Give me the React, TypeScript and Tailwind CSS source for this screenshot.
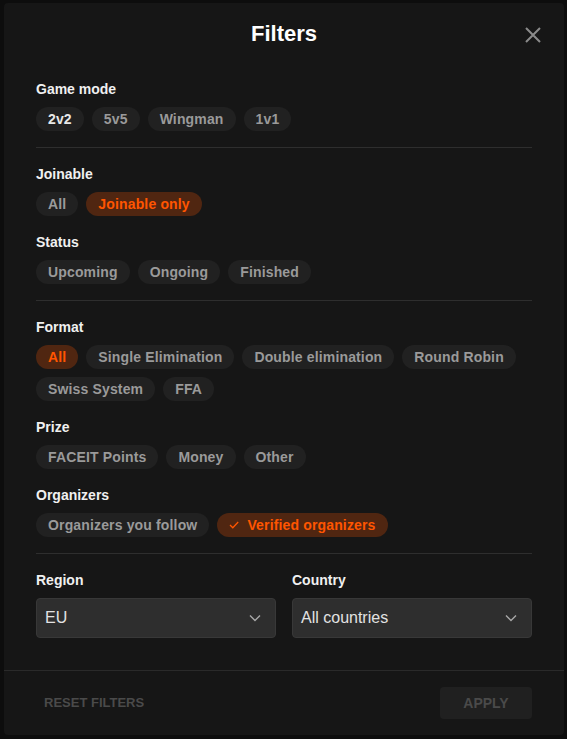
import React from "react"

type ChipProps = {
  label: string
  active?: boolean
  current?: boolean
  check?: boolean
}

function Chip({ label, active, current, check }: ChipProps) {
  if (active) {
    return (
      <span className="flex h-6 items-center gap-2 rounded-full bg-[#502611] px-3 text-[14px] font-bold tracking-[0.15px] text-[#ff5500]">
        {check && (
          <svg width="10" height="8" viewBox="0 0 10 8" fill="none">
            <path d="M1 4L3.8 6.8L9.2 1" stroke="#ff5500" strokeWidth="1.3" />
          </svg>
        )}
        {label}
      </span>
    )
  }
  return (
    <span
      className={`flex h-6 items-center rounded-full bg-[#212121] px-3 text-[14px] font-bold tracking-[0.15px] ${
        current ? "text-[#e8e8e8]" : "text-[#9a9a9a]"
      }`}
    >
      {label}
    </span>
  )
}

function Group({ title, children }: { title: string; children: React.ReactNode }) {
  return (
    <div>
      <div className="mb-2 h-5 text-[14px] font-bold leading-5 text-[#f0f0f0]">{title}</div>
      <div className="flex flex-wrap gap-2">{children}</div>
    </div>
  )
}

function Select({ label, value }: { label: string; value: string }) {
  return (
    <div className="flex-1">
      <div className="mb-2 h-5 text-[14px] font-bold leading-5 text-[#f0f0f0]">{label}</div>
      <div className="flex h-10 items-center justify-between rounded border border-[#383838] bg-[#2e2e2e] pl-2 pr-[14px]">
        <span className="text-[16px] text-[#e2e2e2]">{value}</span>
        <svg width="12" height="8" viewBox="0 0 12 8" fill="none">
          <path d="M1 1.5L6 6.5L11 1.5" stroke="#a8a8a8" strokeWidth="1.4" />
        </svg>
      </div>
    </div>
  )
}

export default function App() {
  return (
    <div
      className="min-h-screen bg-[#0d0d0d] pl-[4px] pt-[3px]"
      style={{ fontFamily: '"Liberation Sans", Arial, sans-serif' }}
    >
      <div className="flex h-[732px] w-[560px] flex-col rounded bg-[#161616]">
        {/* Header */}
        <div className="relative flex h-[60px] items-center justify-center">
          <h1 className="text-[22px] font-bold text-white">Filters</h1>
          <button className="absolute right-[23px] top-[24px]">
            <svg width="16" height="16" viewBox="0 0 16 16" fill="none">
              <path d="M1 1L15 15M15 1L1 15" stroke="#8a8a8a" strokeWidth="2" />
            </svg>
          </button>
        </div>

        {/* Body */}
        <div className="flex-1 px-8 pt-4">
          <Group title="Game mode">
            <Chip label="2v2" current />
            <Chip label="5v5" />
            <Chip label="Wingman" />
            <Chip label="1v1" />
          </Group>

          <div className="my-4 h-px bg-[#2e2e2e]" />

          <div className="flex flex-col gap-4">
            <Group title="Joinable">
              <Chip label="All" />
              <Chip label="Joinable only" active />
            </Group>
            <Group title="Status">
              <Chip label="Upcoming" />
              <Chip label="Ongoing" />
              <Chip label="Finished" />
            </Group>
          </div>

          <div className="my-4 h-px bg-[#2e2e2e]" />

          <div className="flex flex-col gap-4">
            <Group title="Format">
              <Chip label="All" active />
              <Chip label="Single Elimination" />
              <Chip label="Double elimination" />
              <Chip label="Round Robin" />
              <Chip label="Swiss System" />
              <Chip label="FFA" />
            </Group>
            <Group title="Prize">
              <Chip label="FACEIT Points" />
              <Chip label="Money" />
              <Chip label="Other" />
            </Group>
            <Group title="Organizers">
              <Chip label="Organizers you follow" />
              <Chip label="Verified organizers" active check />
            </Group>
          </div>

          <div className="my-4 h-px bg-[#2e2e2e]" />

          <div className="flex gap-4">
            <Select label="Region" value="EU" />
            <Select label="Country" value="All countries" />
          </div>
        </div>

        {/* Footer */}
        <div className="flex items-center justify-between border-t border-[#2a2a2a] px-8 py-4">
          <button className="pl-2 text-[13px] font-bold uppercase text-[#4a4a4a]">Reset filters</button>
          <button className="h-8 w-[92px] rounded bg-[#202020] text-[14px] font-bold uppercase text-[#4a4a4a]">
            Apply
          </button>
        </div>
      </div>
    </div>
  )
}
